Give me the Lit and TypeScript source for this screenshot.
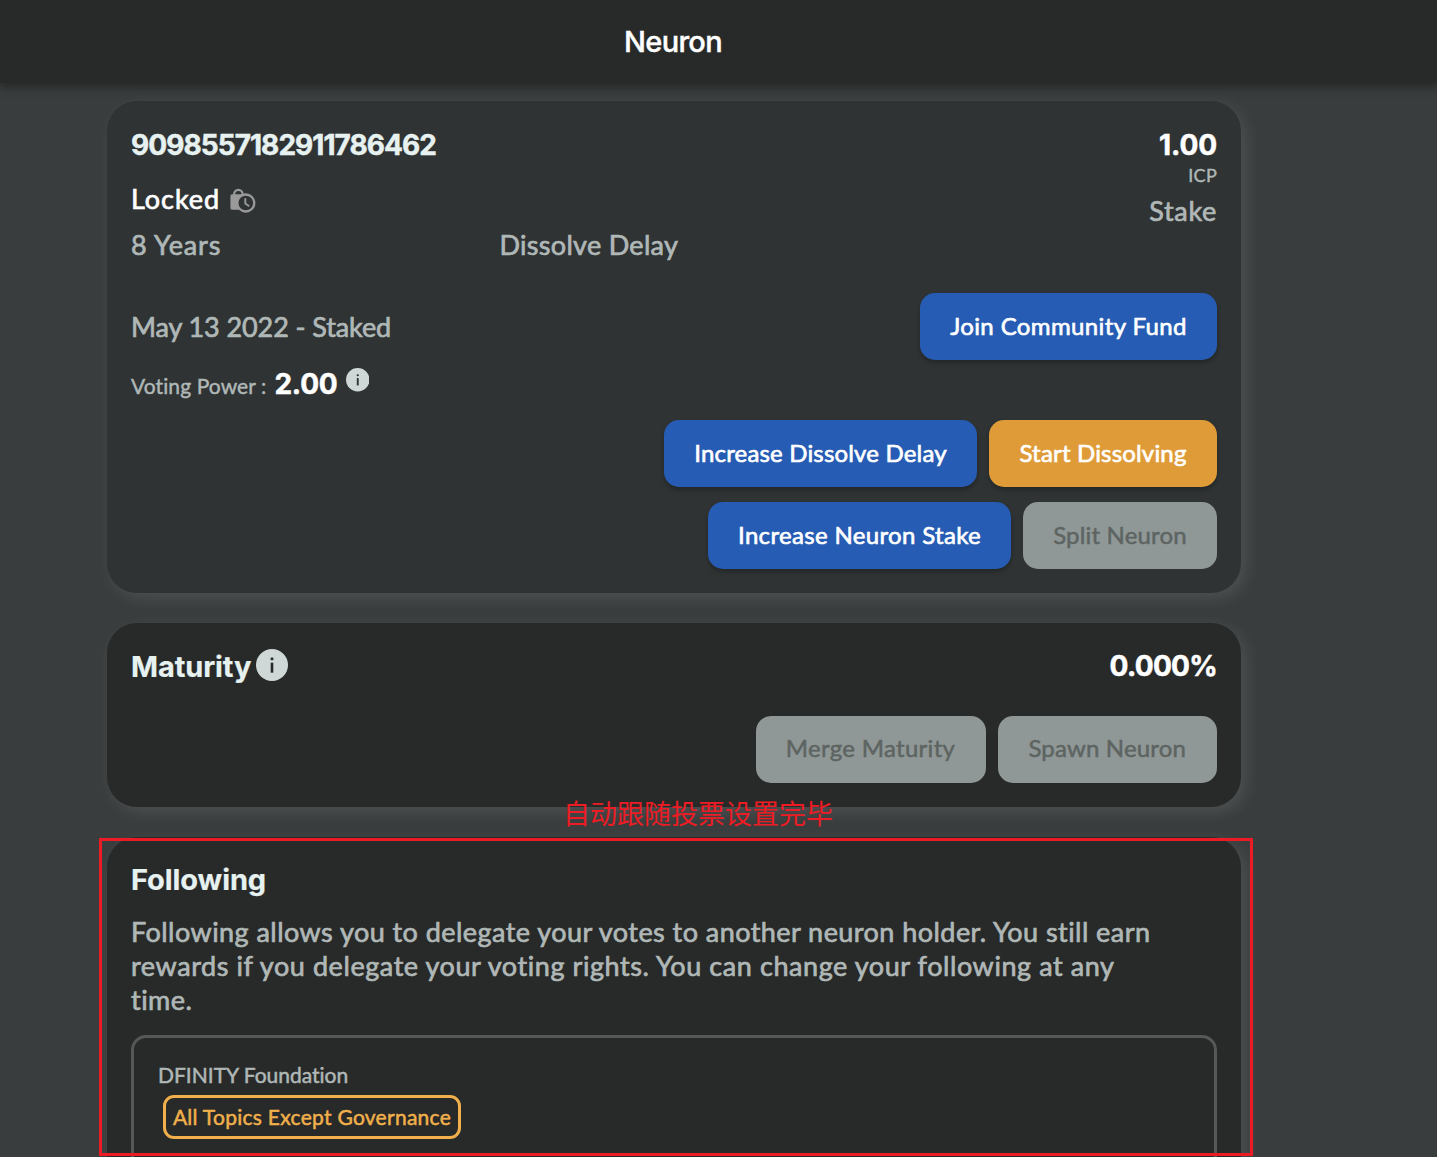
import { LitElement, html, css, svg } from "lit";
import { customElement, property } from "lit/decorators.js";

@customElement("info-icon")
class InfoIcon extends LitElement {
  static styles = css`
    :host { display: block; flex: none; }
    svg { display: block; width: 100%; height: 100%; }
  `;
  @property() ink = "#2f3334";
  render() {
    return html`<svg viewBox="0 0 32 32">
      <circle cx="16" cy="16" r="16" fill="#cfd8d7"></circle>
      <rect x="14.7" y="13.7" width="2.6" height="10" fill=${this.ink}></rect>
      <rect x="14.5" y="8.6" width="3" height="2.6" rx="1.2" fill=${this.ink}></rect>
    </svg>`;
  }
}

const lockClock = svg`
  <path d="M4.2 9V6a4.2 4.2 0 0 1 8.4 0V9" fill="none" stroke="#9a9a9a" stroke-width="2.2"/>
  <rect x=".4" y="6.2" width="15.6" height="15.6" rx="1.8" fill="#9a9a9a"/>
  <circle cx="15.8" cy="15" r="8.5" fill="#2f3334" stroke="#9a9a9a" stroke-width="2.3"/>
  <path d="M15.3 10.2V15.6L19.2 18.2" fill="none" stroke="#9a9a9a" stroke-width="1.9"/>`;

@customElement("app-root")
class AppRoot extends LitElement {
  static styles = css`
    :host {
      display: block; position: relative; height: 1157px; overflow: hidden;
      background: #3a3d3e; color: #b0b8b7;
      font-family: Lato, "Noto Sans CJK SC", sans-serif;
      font-size: 27px; font-variant-ligatures: none; white-space: nowrap;
      -webkit-text-stroke: 0.7px currentColor;
    }
    * { box-sizing: border-box; }
    header {
      position: relative; z-index: 1; height: 83px; padding-right: 91px;
      display: flex; justify-content: center; align-items: center;
      background: #282a29; box-shadow: 0 4px 8px 1px #282a29;
      color: #fff; font: 500 29px/83px Inter, sans-serif; letter-spacing: -0.7px;
      -webkit-text-stroke: 0.4px currentColor;
    }
    main { display: flex; flex-direction: column; gap: 30px; width: 1134px; margin: 18px 0 0 107px; }
    .card {
      padding: 24px 24px 24px; border-radius: 30px; background: #282a29;
      box-shadow: 5px 5px 16px rgba(255, 255, 255, 0.1);
    }
    .neuron { background: #2f3334; height: 492px; }
    .maturity { height: 184px; }
    .following { height: 380px; }
    .bold { font-family: Inter, sans-serif; font-weight: 700; font-size: 28px; color: #fff; -webkit-text-stroke: 0.5px currentColor; }
    .head { font-size: 29px; color: #e6f1f0; letter-spacing: -0.1px; -webkit-text-stroke: 0.2px currentColor; }
    .row { display: flex; justify-content: space-between; }
    .id { line-height: 40px; color: #e6f1f0; letter-spacing: -0.94px; }
    .state { display: flex; align-items: center; gap: 10px; margin-top: 11px; line-height: 45px; color: #fff; letter-spacing: 0.95px; }
    .state svg { width: 26px; height: 26px; margin-top: 4px; }
    .delay { display: grid; grid-template-columns: 368.5px 1fr; line-height: 47px; }
    .years { letter-spacing: 0.8px; }
    .delay-label { letter-spacing: 0.3px; }
    .stake { display: flex; flex-direction: column; align-items: flex-end; }
    .amount { line-height: 40px; letter-spacing: -0.1px; }
    .icp { font-size: 18px; line-height: 20px; letter-spacing: 0.3px; -webkit-text-stroke: 0.4px currentColor; }
    .stake-label { line-height: 51px; letter-spacing: 0.7px; }
    .since { margin-top: 25px; line-height: 67px; letter-spacing: -0.1px; }
    .voting { display: flex; align-items: baseline; height: 46px; line-height: 48px; font-size: 21px; letter-spacing: 0.1px; -webkit-text-stroke: 0.45px currentColor; }
    .power { margin-left: 8px; letter-spacing: -0.2px; }
    .small { align-self: flex-start; width: 23.5px; height: 23.5px; margin: 8px 0 0 8px; }
    .big { width: 32px; height: 32px; margin: 2px 0 0 5px; }
    .actions { display: flex; justify-content: flex-end; gap: 12px; }
    .first { margin-top: 14px; }
    .second { margin-top: 15px; }
    .third { margin-top: 29.5px; }
    button {
      height: 67px; padding: 0 0 2px; border: 0; border-radius: 15px; background: #265cb3; color: #fff;
      font: 400 24px/60px Lato, sans-serif; letter-spacing: 0.17px; white-space: nowrap;
      -webkit-text-stroke: 0.65px currentColor; font-variant-ligatures: none;
      box-shadow: 0 3px 4px rgba(0, 0, 0, 0.25);
    }
    button.warn { background: #df9b38; width: 228px; }
    button:disabled { background: #8f9896; color: #5d6462; box-shadow: none; -webkit-text-stroke: 0.5px currentColor; }
    .join { width: 297px; letter-spacing: 0.38px; }
    .inc-delay { width: 313px; }
    .inc-stake { width: 303px; letter-spacing: 0.33px; }
    .split { width: 194px; }
    .merge { width: 230px; letter-spacing: 0.3px; }
    .spawn { width: 219.5px; }
    .title { display: flex; line-height: 39px; }
    .percent { line-height: 39px; letter-spacing: -0.7px; }
    .follow-title { line-height: 38px; }
    .text { margin: 15.5px 0 0; line-height: 34.3px; letter-spacing: 0.45px; }
    .wide { letter-spacing: 0.57px; }
    .box { margin-top: 17.6px; height: 200px; padding: 24px; border: 3px solid #555857; border-radius: 15px; font-size: 21px; line-height: 26px; -webkit-text-stroke: 0.5px currentColor; }
    .tag {
      display: flex; justify-content: center; align-items: center; width: 298px; height: 44px; margin: 7px 0 0 5px;
      border: 3px solid #f1b04b; border-radius: 11px; color: #f1b04b; letter-spacing: 0.28px;
    }
    .frame { position: absolute; z-index: 2; left: 99px; top: 838px; width: 1154px; height: 318px; border: 3px solid #ed1c24; }
    .note {
      position: absolute; z-index: 2; left: 563px; top: 793px; color: #ed1c24;
      font: 400 27px/40px "Noto Sans CJK SC", sans-serif; -webkit-text-stroke: 0;
    }
  `;
  render() {
    return html`
      <header>Neuron</header>
      <main>
        <section class="card neuron">
          <div class="row">
            <div>
              <div class="bold id">9098557182911786462</div>
              <div class="state">Locked <svg viewBox="0 0 26 26">${lockClock}</svg></div>
              <div class="delay"><span class="years">8 Years</span><span class="delay-label">Dissolve Delay</span></div>
            </div>
            <div class="stake">
              <span class="bold amount">1.00</span>
              <span class="icp">ICP</span>
              <span class="stake-label">Stake</span>
            </div>
          </div>
          <div class="row since">
            <span>May 13 2022 - Staked</span>
            <button class="join">Join Community Fund</button>
          </div>
          <div class="voting">Voting Power :<span class="bold power">2.00</span><info-icon class="small"></info-icon></div>
          <div class="actions first">
            <button class="inc-delay">Increase Dissolve Delay</button>
            <button class="warn">Start Dissolving</button>
          </div>
          <div class="actions second">
            <button class="inc-stake">Increase Neuron Stake</button>
            <button class="split" disabled>Split Neuron</button>
          </div>
        </section>
        <section class="card maturity">
          <div class="row">
            <div class="bold head title">Maturity<info-icon class="big" ink="#282a29"></info-icon></div>
            <div class="bold percent">0.000%</div>
          </div>
          <div class="actions third">
            <button class="merge" disabled>Merge Maturity</button>
            <button class="spawn" disabled>Spawn Neuron</button>
          </div>
        </section>
        <section class="card following">
          <div class="bold head follow-title">Following</div>
          <p class="text">Following allows you to delegate your votes to another neuron holder. You still earn<br /><span class="wide">rewards if you delegate your voting rights. You can change your following at any</span><br />time.</p>
          <div class="box">
            <div>DFINITY Foundation</div>
            <div class="tag">All Topics Except Governance</div>
          </div>
        </section>
      </main>
      <div class="note">自动跟随投票设置完毕</div>
      <div class="frame"></div>
    `;
  }
}
